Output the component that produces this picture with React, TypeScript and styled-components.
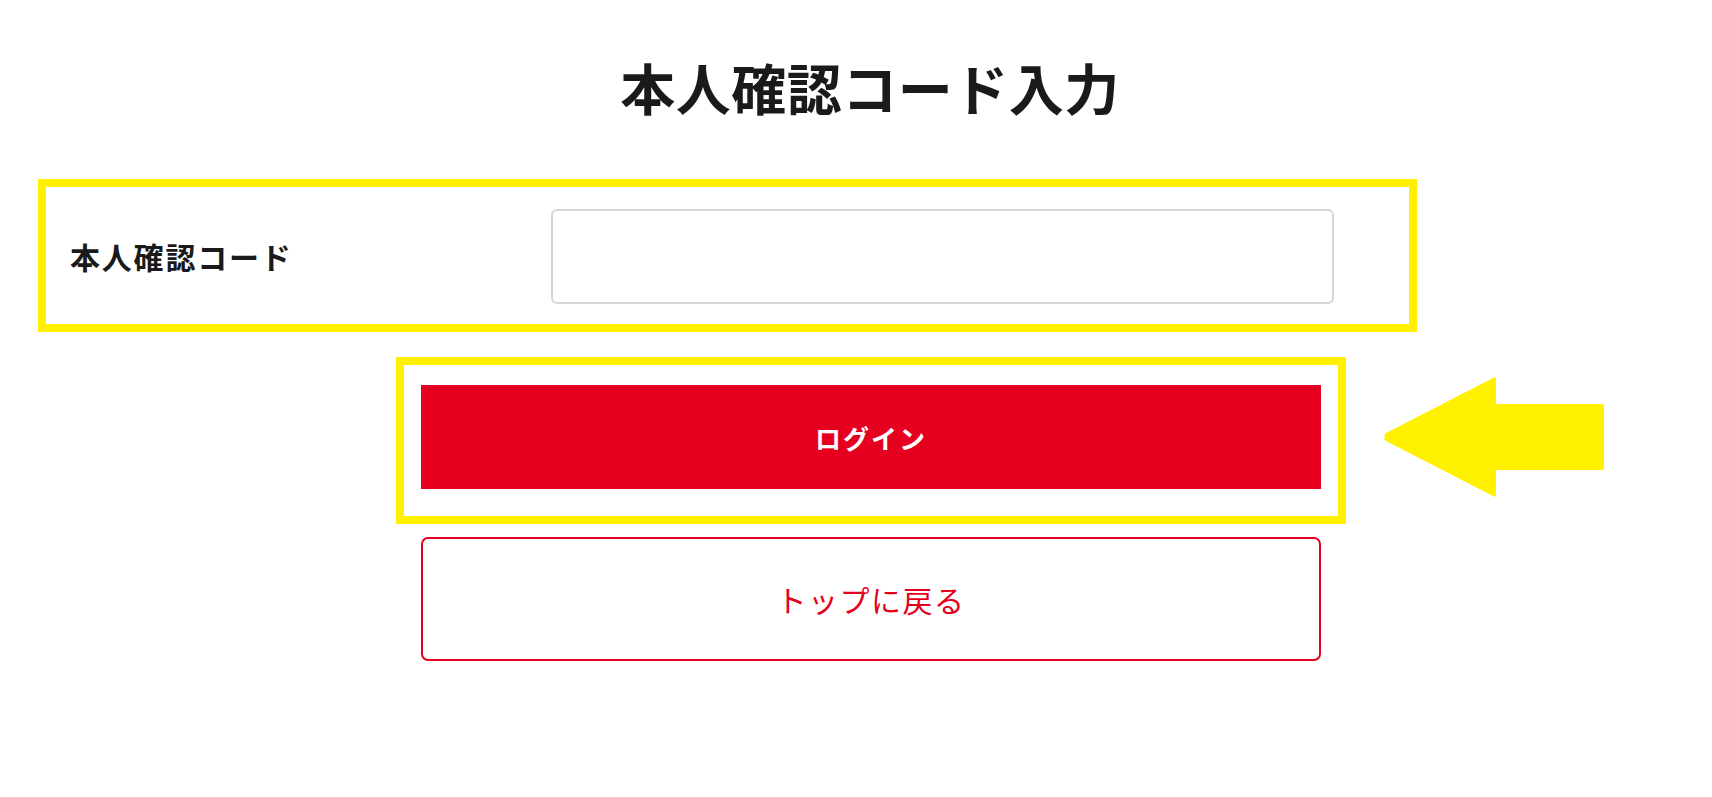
import React from "react";
import styled, { createGlobalStyle } from "styled-components";

const GlobalStyle = createGlobalStyle`
  html, body {
    margin: 0;
    padding: 0;
    background: #ffffff;
  }
  body {
    font-family: "Noto Sans CJK JP", "Noto Sans", sans-serif;
    color: #1a1a1a;
  }
  * { box-sizing: border-box; }
`;

const Page = styled.main`
  display: flex;
  flex-direction: column;
  width: 1712px;
  min-height: 797px;
  padding-top: 46px;
`;

const Title = styled.h1`
  margin: 0;
  padding-left: 28px;
  text-align: center;
  font-size: 55px;
  line-height: 80px;
  font-weight: 700;
  letter-spacing: 0.5px;
  color: #1a1a1a;
`;

const HighlightBox = styled.div<{ $left: number; $width: number }>`
  position: relative;
  margin-left: ${(p) => p.$left}px;
  width: ${(p) => p.$width}px;
  border: 8px solid #fff100;
`;

const FormRow = styled(HighlightBox)`
  margin-top: 53px;
  display: grid;
  grid-template-columns: 505px 783px;
  align-items: center;
  padding: 22px 0 20px;
`;

const Label = styled.label`
  padding-left: 24px;
  padding-bottom: 2px;
  font-size: 30px;
  font-weight: 700;
  letter-spacing: 1.8px;
  color: #1a1a1a;
`;

const CodeInput = styled.input`
  display: block;
  width: 783px;
  height: 95px;
  border: 2px solid #d6d6d6;
  border-radius: 6px;
  background: #ffffff;
  font-family: inherit;
  font-size: 26px;
  padding: 0 20px;
  outline: none;
`;

const Actions = styled.div`
  display: flex;
  flex-direction: column;
  margin-top: 25px;
`;

const SubmitBox = styled(HighlightBox)`
  padding: 20px 17px 27px;
`;

const PrimaryButton = styled.button`
  display: flex;
  align-items: center;
  justify-content: center;
  width: 900px;
  height: 104px;
  border: none;
  border-radius: 0;
  background: #e50020;
  color: #ffffff;
  font-family: inherit;
  font-size: 26px;
  font-weight: 700;
  letter-spacing: 2px;
  cursor: pointer;
`;

const SecondaryButton = styled.button`
  display: flex;
  align-items: center;
  justify-content: center;
  margin: 13px 0 0 421px;
  width: 900px;
  height: 124px;
  border: 2px solid #e50020;
  border-radius: 7px;
  background: #ffffff;
  color: #e50020;
  font-family: inherit;
  font-size: 30px;
  font-weight: 400;
  letter-spacing: 1.5px;
  cursor: pointer;
`;

const Pointer = styled.svg`
  position: absolute;
  left: calc(100% + 45px);
  top: 10px;
  width: 222px;
  height: 124px;
`;

export default function App() {
  return (
    <>
      <GlobalStyle />
      <Page>
        <Title>本人確認コード入力</Title>
        <FormRow $left={38} $width={1379}>
          <Label htmlFor="code">本人確認コード</Label>
          <CodeInput id="code" type="text" />
        </FormRow>
        <Actions>
          <SubmitBox $left={396} $width={950}>
            <PrimaryButton type="button">ログイン</PrimaryButton>
            <Pointer viewBox="0 0 222 124" aria-hidden="true">
              <path
                d="M2 62 Q0 60 3 58 L110 3 Q113 1 113 5 L113 29 L219 29 Q221 29 221 31 L221 93 Q221 95 219 95 L113 95 L113 119 Q113 123 110 121 L3 66 Q0 64 2 62 Z"
                fill="#fff100"
              />
            </Pointer>
          </SubmitBox>
          <SecondaryButton type="button">トップに戻る</SecondaryButton>
        </Actions>
      </Page>
    </>
  );
}
